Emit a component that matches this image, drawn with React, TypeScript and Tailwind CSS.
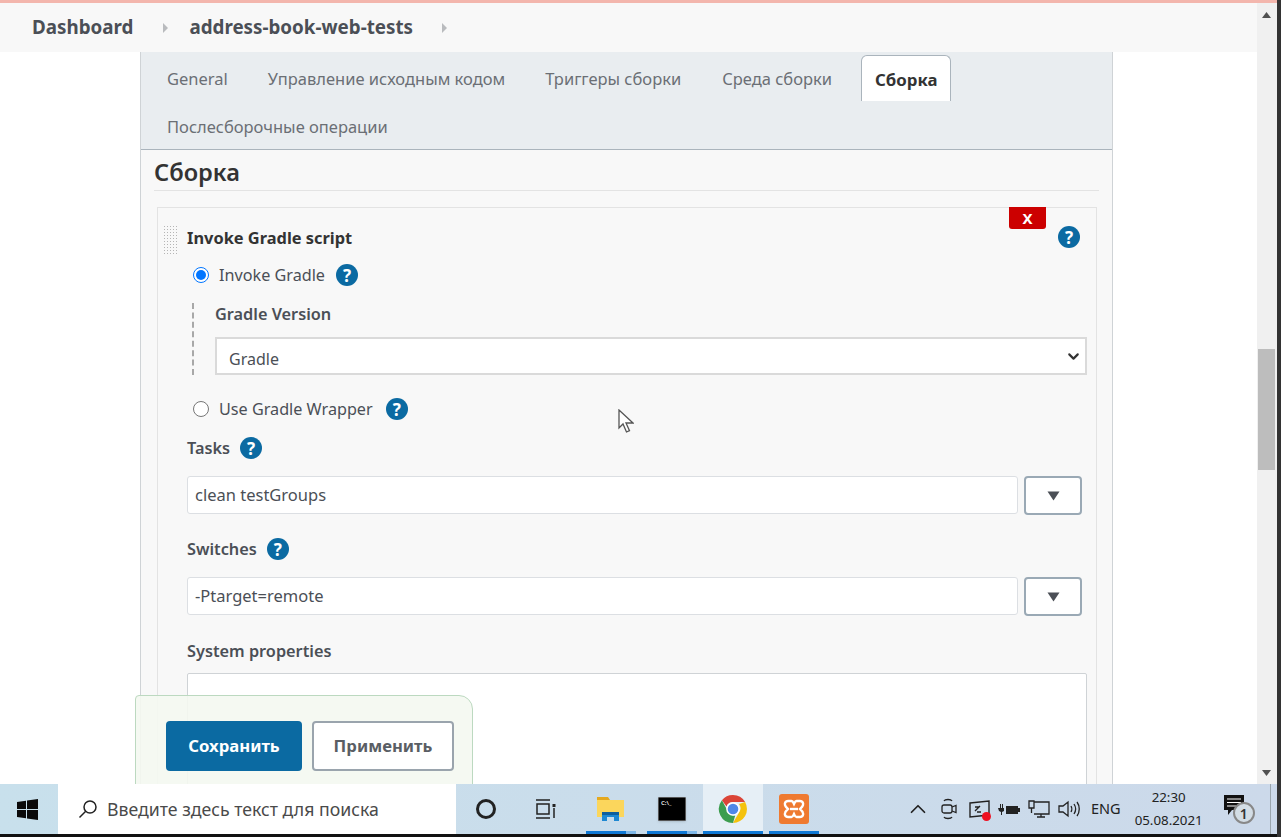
import { ChevronDown, ChevronUp } from "lucide-react";

function Help({ className = "" }: { className?: string }) {
  return (
    <span className={`inline-flex h-[22px] w-[22px] shrink-0 items-center justify-center rounded-full bg-[#0b6aa2] text-[17px] leading-none font-bold text-white ${className}`}>
      ?
    </span>
  );
}

function ComboRow({ value }: { value: string }) {
  return (
    <div className="mt-[17px] flex items-start">
      <div className="flex h-[38px] w-[831px] items-center rounded-[3px] border border-[#dcdfe3] bg-white pl-[7px] text-[16.500px] text-[#4b4f56]">
        {value}
      </div>
      <div className="ml-[6px] flex h-[39px] w-[58px] items-center justify-center rounded-[4px] border-2 border-[#9aa9b5] bg-white">
        <svg width="13" height="10" viewBox="0 0 13 10">
          <path d="M0.5 0.5h12L6.5 9.5z" fill="#4b4f56" />
        </svg>
      </div>
    </div>
  );
}

function WinLogo() {
  return (
    <svg width="21" height="21" viewBox="0 0 21 21" fill="#0a0a0a">
      <path d="M0 3l9-1.300v8.300h-9zM10 1.500l11-1.500v10h-11zM0 11h9v8.300l-9-1.300zM10 11h11v10l-11-1.500z" />
    </svg>
  );
}

function ChromeLogo() {
  return (
    <svg width="30" height="30" viewBox="0 0 30 30">
      <path d="M15 1a14 14 0 0 1 12.100 7H15a7 7 0 0 0-6.500 4.400L3.900 6.300A14 14 0 0 1 15 1z" fill="#db4437" />
      <path d="M27.100 8A14 14 0 0 1 15 29l6-10.500A7 7 0 0 0 21 10z" fill="#f4c20d" />
      <path d="M15 29A14 14 0 0 1 3.900 6.300L9.700 17a7 7 0 0 0 7.500 4.500z" fill="#3c9d4e" />
      <circle cx="15" cy="15" r="6.800" fill="#fff" />
      <circle cx="15" cy="15" r="5.300" fill="#4f88e8" />
    </svg>
  );
}

function Explorer() {
  return (
    <svg width="28" height="26" viewBox="0 0 28 26">
      <path d="M0 1h11l2 3H0z" fill="#e5a91f" />
      <path d="M0 4h27v17H0z" fill="#fbd65c" />
      <path d="M5 25v-9h17v9h-5v-4h-7v4z" fill="#1e88d2" />
      <path d="M5 16h17v3H5z" fill="#0f5f9e" />
    </svg>
  );
}

function Cmd() {
  return (
    <div className="flex h-[24px] w-[28px] rounded-[1px] border border-[#555] bg-black pl-[2px] pt-[2px] text-[6px] leading-[7px] font-bold text-[#ddd] shadow-sm">
      C:\_
    </div>
  );
}

function Xampp() {
  return (
    <div className="flex h-[30px] w-[30px] items-center justify-center rounded-[3px] bg-[#ef7a30]">
      <svg width="22" height="20" viewBox="0 0 22 20" fill="none" stroke="#fff" strokeWidth="2.400">
        <path d="M5 2h3.500c1.500 0 2 2 2.500 3 .5-1 1-3 2.500-3H17c2.500 0 3.500 2 3 4-.3 1.500-2 3-3 4 1 1 2.700 2.500 3 4 .5 2-.5 4-3 4h-3.500c-1.500 0-2-2-2.500-3-.5 1-1 3-2.500 3H5c-2.500 0-3.500-2-3-4 .3-1.500 2-3 3-4-1-1-2.700-2.500-3-4-.5-2 .5-4 3-4z" />
        <path d="M7 10h8" />
      </svg>
    </div>
  );
}

export default function App() {
  return (
    <div
      className="relative flex h-[837px] w-[1281px] overflow-hidden bg-[#333] text-[#4b4f56]"
      style={{ fontFamily: '"Noto Sans", "Open Sans", sans-serif' }}
    >
      <div className="flex w-[1277px] shrink-0 flex-col bg-white">
        <div className="h-[3px] shrink-0 bg-[#f3b6ad]" />

        <div className="flex min-h-0 flex-1">
          <div className="relative min-w-0 flex-1 overflow-hidden">
            {/* breadcrumbs */}
            <div className="flex h-[49px] items-center bg-[#f8f8f8] pl-[32px] text-[18.800px] font-bold text-[#4b4f56]">
              <span>Dashboard</span>
              <svg className="ml-[30px]" width="5" height="10" viewBox="0 0 5 10">
                <path d="M0 0l5 5-5 5z" fill="#b9bbbe" />
              </svg>
              <span className="ml-[21px]">address-book-web-tests</span>
              <svg className="ml-[29px]" width="5" height="10" viewBox="0 0 5 10">
                <path d="M0 0l5 5-5 5z" fill="#b9bbbe" />
              </svg>
            </div>

            <main className="ml-[140px] h-[800px] w-[973px] border-x border-[#cfd3d6] bg-[#f8f8f8]">
              {/* tabs */}
              <div className="flex h-[98px] flex-wrap content-start border-b border-[#aab4bc] bg-[#e9edf0] pl-[12px] pt-[3px] text-[16.500px] text-[#6b6f75]">
                <div className="mr-[12px] flex h-[46px] items-center px-[14px] pt-[2px]">General</div>
                <div className="mr-[12px] flex h-[46px] items-center px-[14px] pt-[2px]">Управление исходным кодом</div>
                <div className="mr-[12px] flex h-[46px] items-center px-[14px] pt-[2px]">Триггеры сборки</div>
                <div className="mr-[14px] flex h-[46px] items-center px-[15px] pt-[2px]">Среда сборки</div>
                <div className="flex h-[46px] items-center rounded-t-[6px] border-x border-t border-[#aab4bc] bg-white px-[13px] pt-[2px] text-[16.800px] font-bold text-[#333]">
                  Сборка
                </div>
                <div className="mt-[2px] flex h-[46px] w-full items-center px-[14px] pt-[2px]">Послесборочные операции</div>
              </div>

              <div className="px-[13px]">
                <h2 className="mt-[7px] h-[34px] border-b border-[#e3e3e3] text-[23.600px] leading-[31px] font-semibold text-[#333]">Сборка</h2>

                {/* build step */}
                <div className="relative mt-[16px] mr-[2px] ml-[3px] h-[620px] border border-[#e3e3e3] pl-[29px]">
                  <div className="absolute top-[17px] left-[5px] h-[30px] w-[15px] bg-[radial-gradient(#b5b5b5_1px,transparent_1px)] bg-[length:3px_3px]" />
                  <div className="absolute top-[-1px] right-[50px] flex h-[22px] w-[37px] items-center justify-center rounded-b-[3px] bg-[#cc0000] text-[15px] font-bold text-white">
                    X
                  </div>
                  <Help className="absolute top-[18px] right-[16px]" />

                  <div className="pt-[19px] text-[16.400px] leading-[22px] font-bold text-[#333]">Invoke Gradle script</div>

                  <div className="mt-[15px] ml-[6px] flex h-[22px] items-center text-[16.200px]">
                    <span className="flex h-[16px] w-[16px] items-center justify-center rounded-full border border-[#0075ff] bg-white">
                      <span className="h-[10px] w-[10px] rounded-full bg-[#0075ff]" />
                    </span>
                    <span className="ml-[10px]">Invoke Gradle</span>
                    <Help className="ml-[11px]" />
                  </div>

                  <div className="mt-[17px] ml-[5px] border-l-2 border-dashed border-[#a8a8a8] pl-[21px]">
                    <div className="text-[16.300px] leading-[22px] font-semibold">Gradle Version</div>
                    <div className="mt-[12px] flex h-[38px] w-[872px] items-center justify-between border-2 border-[#dadada] bg-white pr-[3px] pl-[12px] text-[16px]">
                      <span className="pt-[6px]">Gradle</span>
                      <ChevronDown size={17} strokeWidth={3} className="text-[#333]" />
                    </div>
                  </div>

                  <div className="mt-[23px] ml-[6px] flex h-[22px] items-center text-[16.200px]">
                    <span className="h-[16px] w-[16px] rounded-full border border-[#767676] bg-white" />
                    <span className="ml-[10px]">Use Gradle Wrapper</span>
                    <Help className="ml-[13px]" />
                  </div>

                  <div className="mt-[17px] flex h-[22px] items-center text-[16.300px] font-semibold">
                    Tasks <Help className="ml-[10px]" />
                  </div>
                  <ComboRow value="clean testGroups" />

                  <div className="mt-[23px] flex h-[22px] items-center text-[16.300px] font-semibold">
                    Switches <Help className="ml-[10px]" />
                  </div>
                  <ComboRow value="-Ptarget=remote" />

                  <div className="mt-[24px] flex h-[22px] items-center text-[16.300px] font-semibold">System properties</div>
                  <div className="mt-[11px] h-[200px] w-[900px] rounded-[2px] border border-[#cfd3d6] bg-white" />
                </div>
              </div>
            </main>

            {/* sticky save bar */}
            <div className="absolute top-[692px] left-[135px] flex h-[100px] w-[338px] items-start gap-[10px] rounded-tl-[4px] rounded-tr-[14px] border border-[#bcd9c0] bg-[#f4f8f1]/90 pt-[25px] pl-[30px]">
              <div className="flex h-[50px] w-[136px] items-center justify-center rounded-[4px] bg-[#0b6aa2] text-[16.700px] font-bold text-white">
                Сохранить
              </div>
              <div className="flex h-[50px] w-[142px] items-center justify-center rounded-[4px] border-2 border-[#9aa4ad] bg-white text-[16.700px] font-bold text-[#5a5e64]">
                Применить
              </div>
            </div>
          </div>

          {/* scrollbar */}
          <div className="relative w-[20px] shrink-0 bg-[#f0f0f0]">
            <svg className="absolute top-[9px] left-[5px]" width="9" height="6" viewBox="0 0 9 6">
              <path d="M4.500 0l4.500 6H0z" fill="#505050" />
            </svg>
            <div className="absolute top-[346px] left-[1px] h-[121px] w-[17px] bg-[#bdbdbd]" />
            <svg className="absolute top-[767px] left-[5px]" width="9" height="6" viewBox="0 0 9 6">
              <path d="M4.500 6L9 0H0z" fill="#505050" />
            </svg>
          </div>
        </div>

        {/* mouse cursor */}
        <svg className="absolute top-[409px] left-[618px]" width="16" height="25" viewBox="0 0 16 25">
          <path d="M1 1v18l4-4 3.500 8 3-1.300-3.500-7.700H15z" fill="#fff" stroke="#555" strokeWidth="1.300" />
        </svg>

        {/* taskbar */}
        <div className="relative flex h-[50px] shrink-0 items-center bg-gradient-to-r from-[#c8e0ec] to-[#ccd9ea] text-[#111]">
          <div className="mr-[4px] flex w-[54px] justify-center">
            <WinLogo />
          </div>
          <div className="flex h-full w-[398px] items-center bg-white pl-[20px] text-[17.700px] text-[#4a4a4a]">
            <svg width="20" height="20" viewBox="0 0 20 20" fill="none" stroke="#222" strokeWidth="1.500">
              <circle cx="12" cy="8" r="6" />
              <path d="M7.700 12.300L1.500 18.500" />
            </svg>
            <span className="ml-[9px]">Введите здесь текст для поиска</span>
          </div>
          <div className="flex w-[60px] justify-center">
            <span className="h-[20px] w-[20px] rounded-full border-[3px] border-[#222]" />
          </div>
          <div className="flex w-[60px] justify-center">
            <svg width="22" height="20" viewBox="0 0 22 20" fill="none" stroke="#222" strokeWidth="1.500">
              <path d="M1 1h14M1 19h14M2 5h12v10H2zM19 9v10" />
              <path d="M17.500 5h3v3h-3z" fill="#222" stroke="none" />
            </svg>
          </div>
          <div className="relative ml-[10px] flex h-full w-[50px] items-center justify-center">
            <Explorer />
            <div className="absolute right-[10px] bottom-0 left-0 h-[3px] bg-[#0f78d4]" />
            <div className="absolute right-0 bottom-0 h-[3px] w-[10px] bg-[#7fb8e8]" />
          </div>
          <div className="relative ml-[11px] flex h-full w-[50px] items-center justify-center">
            <Cmd />
            <div className="absolute right-[10px] bottom-0 left-0 h-[3px] bg-[#0f78d4]" />
            <div className="absolute right-0 bottom-0 h-[3px] w-[10px] bg-[#7fb8e8]" />
          </div>
          <div className="relative ml-[6px] flex h-full w-[60px] items-center justify-center bg-[#e6eff6]">
            <ChromeLogo />
            <div className="absolute right-0 bottom-0 left-0 h-[3px] bg-[#0f78d4]" />
          </div>
          <div className="relative ml-[6px] flex h-full w-[50px] items-center justify-center">
            <Xampp />
            <div className="absolute right-0 bottom-0 left-0 h-[3px] bg-[#0f78d4]" />
          </div>

          <div className="ml-[84px] flex w-[30px] justify-center">
            <ChevronUp size={26} strokeWidth={1.600} className="text-[#222]" />
          </div>
          <div className="ml-[4px] flex w-[24px] justify-center">
            <svg width="16" height="22" viewBox="0 0 16 22" fill="none" stroke="#222" strokeWidth="1.300">
              <path d="M3 3c1-2 7-2 8 0M3 19c1 2 7 2 8 0" />
              <rect x="1" y="7" width="10" height="8" rx="2" />
              <path d="M11 9l4-1.500v7l-4-1.500" />
            </svg>
          </div>
          <div className="relative ml-[6px] flex w-[24px] justify-center">
            <svg width="21" height="19" viewBox="0 0 21 19" fill="none" stroke="#222" strokeWidth="1.400">
              <path d="M1 3l19-2v14l-19 2z" />
              <path d="M6 11l5-5M6 7h4M8 12h4" />
            </svg>
            <span className="absolute right-[0px] bottom-[-2px] h-[9px] w-[9px] rounded-full bg-[#ee1122]" />
          </div>
          <div className="ml-[6px] flex w-[24px] justify-center">
            <svg width="22" height="14" viewBox="0 0 22 14" fill="#222">
              <path d="M8 4h12v8H8zM20 6h2v4h-2z" />
              <path d="M0 6h2V2h1v4h1V2h1v4h1v3l-2 1v3H3v-3L1 9z" />
            </svg>
          </div>
          <div className="ml-[6px] flex w-[24px] justify-center">
            <svg width="22" height="19" viewBox="0 0 22 19" fill="none" stroke="#222" strokeWidth="1.300">
              <path d="M6 2h15v12H6M1 1h5v7H1zM3.500 8v5M13 14v3M9 17h8" />
            </svg>
          </div>
          <div className="ml-[6px] flex w-[24px] justify-center">
            <svg width="22" height="18" viewBox="0 0 22 18" fill="none" stroke="#222" strokeWidth="1.300">
              <path d="M1 6h4l5-4v14l-5-4H1zM13 6c1 1.500 1 4.500 0 6M16 4c2 3 2 7 0 10M19 2c3 4 3 10 0 14" />
            </svg>
          </div>
          <span className="ml-[10px] text-[14.500px] text-[#222]">ENG</span>
          <div className="ml-[15px] flex w-[66px] flex-col items-center text-[13.300px] leading-[23px] text-[#222]">
            <span>22:30</span>
            <span>05.08.2021</span>
          </div>
          <div className="relative ml-[22px] h-[30px] w-[32px]">
            <svg className="absolute top-[1px] left-0" width="22" height="22" viewBox="0 0 22 22">
              <path d="M0 0h20v15H8l-4 5v-5H0z" fill="#111" />
              <path d="M3 4h14M3 7.500h14M3 11h9" stroke="#fff" strokeWidth="1" />
            </svg>
            <span className="absolute top-[8px] left-[9px] flex h-[22px] w-[22px] items-center justify-center rounded-full border-2 border-[#888] bg-[#d3dde5] text-[14px] font-semibold text-[#333]">
              1
            </span>
          </div>
          <div className="absolute top-0 right-[6px] bottom-0 w-px bg-[#9aa5ad]" />
        </div>

        <div className="h-[3px] shrink-0 bg-[#111]" />
      </div>
    </div>
  );
}
